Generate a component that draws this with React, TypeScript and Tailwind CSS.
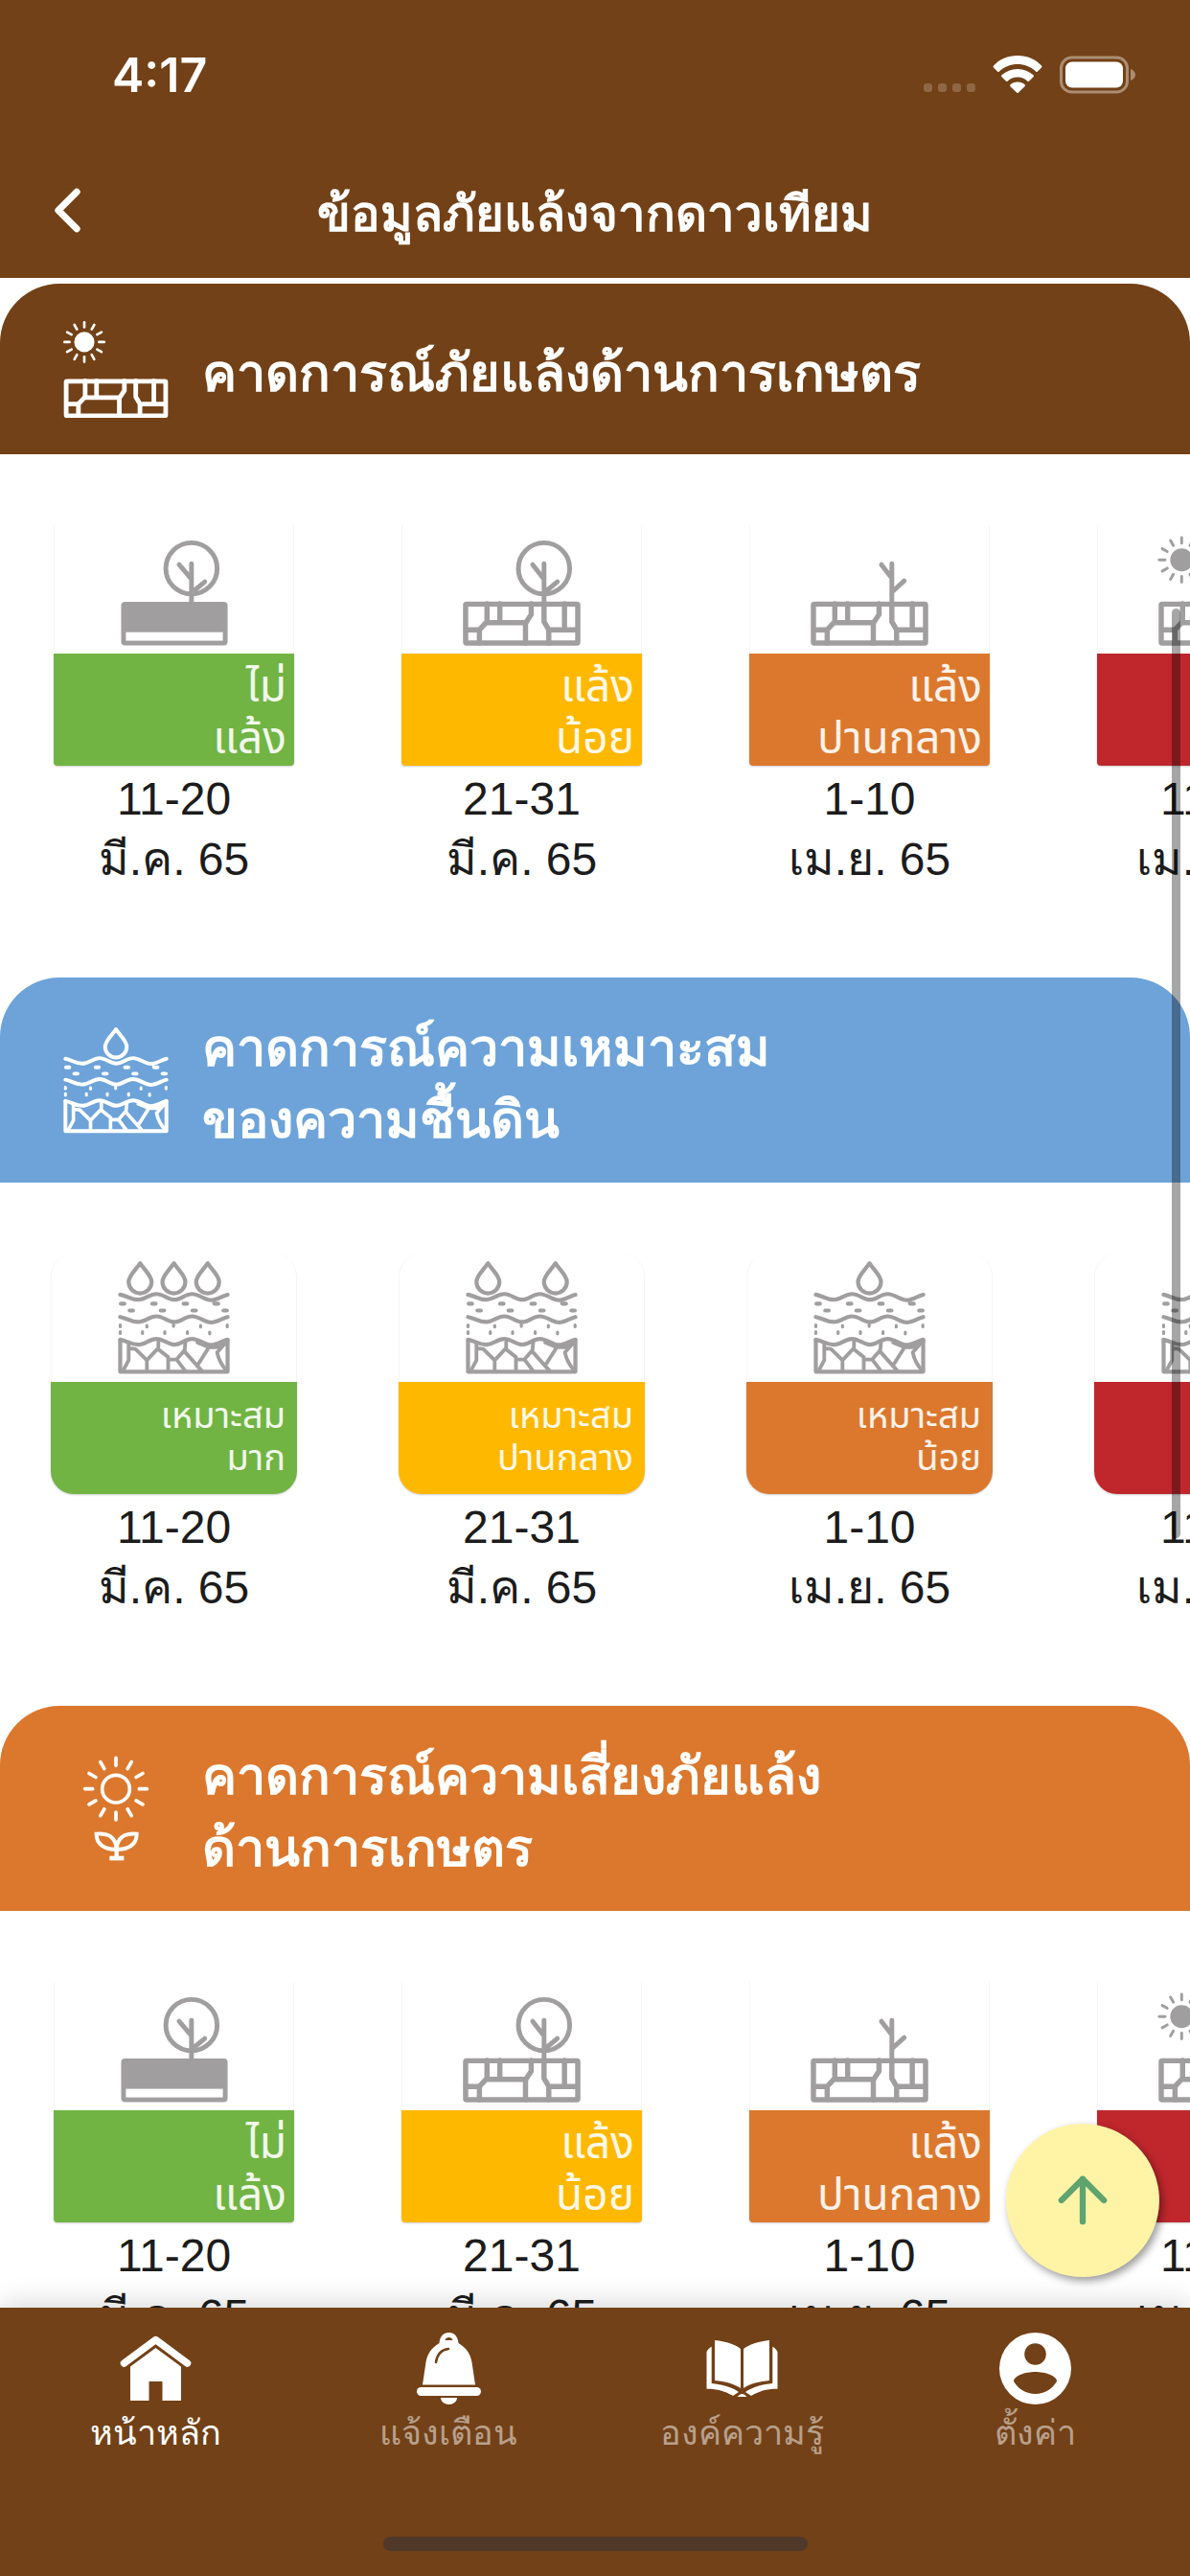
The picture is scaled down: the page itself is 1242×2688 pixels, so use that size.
import type { ReactNode } from 'react'
import { ArrowUp, ChevronLeft } from 'lucide-react'
import clsx from 'clsx'

type Level = 'none' | 'low' | 'medium' | 'high'
type Kind = 'drought' | 'soil'

interface Forecast {
  level: Level
  label: [string, string]
  days: string
  month: string
}

interface ForecastSection {
  id: string
  title: string[]
  kind: Kind
  banner: string
  icon: ReactNode
  items: Forecast[]
}

const RAYS = [0, 30, 60, 90, 120, 150, 180, 210, 240, 270, 300, 330]

const levelColor: Record<Level, string> = {
  none: 'bg-[#71b443]',
  low: 'bg-[#ffb800]',
  medium: 'bg-[#db782d]',
  high: 'bg-[#bf272d]',
}

function SmallSun() {
  return (
    <g>
      <circle cx="88" cy="36" r="12" fill="currentColor" stroke="none" />
      {RAYS.map(a => (
        <path key={a} d="M88 18.500v-6" strokeWidth="3" transform={`rotate(${a} 88 36)`} />
      ))}
    </g>
  )
}

function CrackedGround() {
  return (
    <g strokeWidth="5.500">
      <rect x="66.500" y="82.500" width="118" height="41" rx="1" />
      <path d="M89 82v19l-8 8.500v14M67 109.500h14M102.500 82v20M88 102h42M135.500 82v11.500l-6 9v21M149 82v19l5 8.500v14M154 109.500h30M170.500 82v27" />
    </g>
  )
}

function DroughtDrawing({ level }: { level: Level }) {
  return (
    <svg viewBox="0 0 251 134" className="w-[251px] text-[#a09e9f]" fill="none" stroke="currentColor" strokeWidth="5" strokeLinecap="round">
      {level === 'none' && (
        <>
          <rect x="70" y="80" width="112" height="46" rx="4" fill="currentColor" stroke="none" />
          <rect x="75" y="112" width="102" height="9" fill="#fff" stroke="none" />
          <circle cx="144" cy="45" r="27" />
          <path d="M144 40v42M131 41l12 14M158 59l-12 10" />
        </>
      )}
      {level === 'low' && (
        <>
          <CrackedGround />
          <circle cx="149" cy="45" r="27" />
          <path d="M149 40v42M137 41l11 14M163 59l-12 10" />
        </>
      )}
      {level === 'medium' && (
        <>
          <CrackedGround />
          <path d="M149 40v42M138 41l10 13M162 58l-12 11" />
        </>
      )}
      {level === 'high' && (
        <>
          <CrackedGround />
          <SmallSun />
        </>
      )}
    </svg>
  )
}

const dashes = [[36, 163], [129, 163], [222, 163], [314, 163], [62, 183], [154, 183], [248, 183], [340, 183]]
const dots = [[39, 229], [118, 230], [197, 228], [277, 230], [356, 229], [39, 249], [105, 249], [171, 249], [238, 249], [304, 250]]

function SoilLayers({ drops, className }: { drops: number[], className: string }) {
  return (
    <svg viewBox="32 34 332 338" className={className} fill="none" stroke="currentColor" strokeWidth="12" strokeLinecap="round" strokeLinejoin="round">
      {drops.map(x => (
        <path key={x} d="M0 43C-12 62-34 80-34 98a34 34 0 0 0 68 0C34 80 12 62 0 43z" transform={`translate(${x} 0)`} />
      ))}
      {[0, 66, 133].map(y => (
        <path
          key={y}
          d="M39 136C60 140 70 151 92 151S125 134 146 134 180 151 199 151 232 134 252 134 290 152 308 152 340 140 357 136"
          transform={`translate(0 ${y})`}
        />
      ))}
      {dashes.map(([x, y]) => (
        <path key={`${x}-${y}`} d={`M${x + 5} ${y}h10`} />
      ))}
      <path d="M315 163v-12" strokeWidth="6" />
      {dots.map(([x, y]) => (
        <path key={`${x}-${y}`} d={`M${x} ${y - 3}v5`} strokeWidth="9" />
      ))}
      <path d="M39 270v94h318v-94" />
      <path
        strokeWidth="11"
        d="M64 280v50l-16 30M66 295l18 2 34 33v32M118 330l34-36v-18M152 298l29 23v40M181 328h25l24-28 2-24M206 328l26 34M231 306l50 56M270 342l28-44v-8l-30-12M298 292h26l31-22M354 275l-28 32q6 30 28 54"
      />
    </svg>
  )
}

function SunAndCracks() {
  return (
    <svg viewBox="63 10 125 117" className="w-[110px] shrink-0 text-white" fill="none" stroke="currentColor" strokeLinecap="round">
      <SmallSun />
      <CrackedGround />
    </svg>
  )
}

function SunAndSprout() {
  return (
    <svg viewBox="18 38 330 330" className="w-[110px] shrink-0 text-white" fill="none" stroke="currentColor" strokeWidth="11" strokeLinecap="round">
      <circle cx="183" cy="142" r="43" />
      {RAYS.map(a => (
        <path key={a} d="M183 69V45" transform={`rotate(${a} 183 142)`} />
      ))}
      <path d="M122 283c40-3 61 12 63 48-38 2-63-16-63-48zM248 283c-40-3-61 12-63 48 38 2 63-16 63-48z" strokeWidth="12" />
      <path d="M185 325v30" strokeWidth="13" />
      <path d="M170 359h31" strokeWidth="14" strokeLinecap="square" />
    </svg>
  )
}

const droughtItems: Forecast[] = [
  { level: 'none', label: ['ไม่', 'แล้ง'], days: '11-20', month: 'มี.ค. 65' },
  { level: 'low', label: ['แล้ง', 'น้อย'], days: '21-31', month: 'มี.ค. 65' },
  { level: 'medium', label: ['แล้ง', 'ปานกลาง'], days: '1-10', month: 'เม.ย. 65' },
  { level: 'high', label: ['แล้ง', 'มาก'], days: '11-20', month: 'เม.ย. 65' },
]

const soilItems: Forecast[] = [
  { level: 'none', label: ['เหมาะสม', 'มาก'], days: '11-20', month: 'มี.ค. 65' },
  { level: 'low', label: ['เหมาะสม', 'ปานกลาง'], days: '21-31', month: 'มี.ค. 65' },
  { level: 'medium', label: ['เหมาะสม', 'น้อย'], days: '1-10', month: 'เม.ย. 65' },
  { level: 'high', label: ['ไม่', 'เหมาะสม'], days: '11-20', month: 'เม.ย. 65' },
]

const soilDrops: Record<Level, number[]> = {
  none: [98, 198, 298],
  low: [98, 298],
  medium: [198],
  high: [],
}

const sections: ForecastSection[] = [
  {
    id: 'drought',
    title: ['คาดการณ์ภัยแล้งด้านการเกษตร'],
    kind: 'drought',
    banner: 'bg-[#724117]',
    icon: <SunAndCracks />,
    items: droughtItems,
  },
  {
    id: 'soil',
    title: ['คาดการณ์ความเหมาะสม', 'ของความชื้นดิน'],
    kind: 'soil',
    banner: 'bg-[#6da3d9]',
    icon: <SoilLayers drops={[198]} className="w-[110px] shrink-0 text-white" />,
    items: soilItems,
  },
  {
    id: 'risk',
    title: ['คาดการณ์ความเสี่ยงภัยแล้ง', 'ด้านการเกษตร'],
    kind: 'drought',
    banner: 'bg-[#db782d]',
    icon: <SunAndSprout />,
    items: droughtItems,
  },
]

function ForecastItem({ item, kind }: { item: Forecast, kind: Kind }) {
  const soil = kind === 'soil'

  return (
    <li className="flex w-[363px] shrink-0 flex-col items-center">
      <div
        className={clsx(
          'flex h-[134px] justify-center border-x border-neutral-100',
          soil ? 'w-[257px] items-end rounded-t-3xl pb-2' : 'w-[251px]',
        )}
      >
        {soil
          ? <SoilLayers drops={soilDrops[item.level]} className="w-[117px] text-[#a09e9f]" />
          : <DroughtDrawing level={item.level} />}
      </div>
      <div
        className={clsx(
          'mb-[3px] flex h-[117px] flex-col justify-center text-right font-["Noto_Sans_Thai","Liberation_Sans",sans-serif] text-white/90 shadow-[0_1px_2px_rgba(0,0,0,0.2)]',
          levelColor[item.level],
          soil ? 'w-[257px] rounded-b-3xl pr-3 text-[38px] leading-[44px]' : 'w-[251px] rounded-b pt-2 pr-2 text-[46px] leading-[54px]',
        )}
      >
        <span>{item.label[0]}</span>
        <span>{item.label[1]}</span>
      </div>
      <p className="text-center text-5xl leading-[63px] text-[#1c1c1c]">
        {item.days}
        <br />
        {item.month}
      </p>
    </li>
  )
}

function SectionBlock({ section }: { section: ForecastSection }) {
  return (
    <section>
      <div className={clsx('flex min-h-[178px] items-center gap-[35px] rounded-t-[62px] px-[66px] py-7', section.banner)}>
        {section.icon}
        <h2 className="pt-2 text-[54px] leading-[75px] font-bold text-white">
          {section.title.map(line => (
            <span key={line} className="block">{line}</span>
          ))}
        </h2>
      </div>
      <ul className="flex overflow-x-auto pt-[74px] pb-[92px] [scrollbar-width:none]">
        {section.items.map(item => (
          <ForecastItem key={item.days + item.month} item={item} kind={section.kind} />
        ))}
      </ul>
    </section>
  )
}

function StatusBar() {
  return (
    <div className="flex h-[152px] items-center justify-between pt-1 pr-14 pl-[117px] text-white">
      <time className="font-[Inter,sans-serif] text-[50px] font-semibold">4:17</time>
      <div className="flex items-center gap-[18px]">
        <svg viewBox="0 0 54 40" className="w-[54px]" fill="#fff" fillOpacity="0.2">
          {[0, 15, 30, 45].map(x => <rect key={x} x={x} y="29" width="9" height="9" rx="3" />)}
        </svg>
        <svg viewBox="0 0 52 40" className="w-[52px]" fill="#fff">
          <path d="M26 0C36 0 45 4 51 10.500q1 1 0 2l-4 4q-1 1-2 0C40 11.500 33 9 26 9S12 11.500 7 16.500q-1 1-2 0l-4-4q-1-1 0-2C7 4 16 0 26 0z" />
          <path d="M26 14c6.500 0 12 2.300 16.500 6.300q1 1 0 2l-4.300 4.200q-1 1-2 0C33.500 24 30 22.500 26 22.500S18.500 24 15.800 26.500q-1 1-2 0l-4.300-4.200q-1-1 0-2C14 16.300 19.500 14 26 14z" />
          <path d="M26 27.500c3 0 5.500 1 7.500 2.700q1 1 0 2l-6.500 6.300q-1 1-2 0l-6.500-6.300q-1-1 0-2c2-1.700 4.500-2.700 7.500-2.700z" />
        </svg>
        <svg viewBox="0 0 80 40" className="w-20" fill="none">
          <rect x="1.500" y="2" width="69" height="36" rx="11" stroke="#fff" strokeOpacity="0.4" strokeWidth="3" />
          <rect x="6" y="6.500" width="60" height="27" rx="7" fill="#fff" />
          <path d="M74 14c3 1 5 3.500 5 6s-2 5-5 6z" fill="#fff" fillOpacity="0.4" />
        </svg>
      </div>
    </div>
  )
}

function HomeIcon() {
  return (
    <svg viewBox="0 0 75 75" className="size-[75px]" fill="#fff">
      <path d="M4.500 32 37.500 7.500l33 24.500" fill="none" stroke="#fff" strokeWidth="7.500" strokeLinecap="round" strokeLinejoin="round" />
      <path d="M37.500 16 64 35.500V71H44.500V51h-14v20H11V35.500z" />
    </svg>
  )
}

function BellIcon() {
  return (
    <svg viewBox="0 0 75 75" className="size-[75px]" fill="#fff">
      <path fillRule="evenodd" d="M37.500 0c6 0 9.500 4.500 10 11C57 17 60 23 61.500 31l3.500 23.500H10L13.500 31C15 23 18 17 27.500 11c.5-6.500 4-11 10-11zm-4 8h8c-1-4-7-4-8 0z" />
      <path d="M24 31c1-7 5-13 13-14" fill="none" stroke="#724117" strokeWidth="2.500" strokeLinecap="round" />
      <rect x="4" y="57" width="67" height="9" rx="4.500" />
      <path d="M29 68h17c0 4-4 7-8.500 7S29 72 29 68z" />
    </svg>
  )
}

function BookIcon() {
  return (
    <svg viewBox="0 0 75 75" className="size-[75px]" fill="#fff">
      <path d="M9 8c10 1 21 4 27 9v41C29 53 19 51 9 50zM66 8c-10 1-21 4-27 9v41c7-5 17-7 27-8z" />
      <path d="M5.700 14.700C3 16 1.500 18 .5 20v38.700C11 58.500 20 61 28 66l6-4C26 56.500 16 54 5.700 53zM69.300 14.700c2.700 1.300 4.200 3.300 5.200 5.300v38.700C64 58.500 55 61 47 66l-6-4c8-5.500 18-8 28.300-9z" />
      <path d="M32.500 67q5-6 10 0z" />
    </svg>
  )
}

function AccountIcon() {
  return (
    <svg viewBox="0 0 75 75" className="size-[75px]" fill="#fff">
      <circle cx="37.500" cy="37.500" r="37.500" />
      <circle cx="37.500" cy="22.500" r="11.300" fill="#724117" />
      <path d="M15 51c0-6 12-10 22.500-10S60 45 60 51c-5 8-13 13-22.500 13S20 59 15 51z" fill="#724117" />
    </svg>
  )
}

const tabs = [
  { label: 'หน้าหลัก', icon: <HomeIcon />, active: true },
  { label: 'แจ้งเตือน', icon: <BellIcon />, active: false },
  { label: 'องค์ความรู้', icon: <BookIcon />, active: false },
  { label: 'ตั้งค่า', icon: <AccountIcon />, active: false },
]

function TabBar() {
  return (
    <nav className="relative flex h-[280px] shrink-0 flex-col items-center justify-between bg-[#724117] px-[9px] py-[26px] shadow-[0_0_30px_rgba(0,0,0,0.2)]">
      <ul className="grid w-full grid-cols-4">
        {tabs.map(tab => (
          <li key={tab.label}>
            <a href="#" className="flex flex-col items-center">
              {tab.icon}
              <span className={clsx('text-4xl leading-[60px]', tab.active ? 'text-white' : 'text-white/50')}>
                {tab.label}
              </span>
            </a>
          </li>
        ))}
      </ul>
      <div className="h-[15px] w-[443px] rounded-full bg-[#50392a]" />
    </nav>
  )
}

export default function App() {
  return (
    <div className='relative flex h-screen flex-col overflow-hidden bg-white font-["Liberation_Sans",sans-serif]'>
      <header className="shrink-0 bg-[#724117]">
        <StatusBar />
        <div className="grid h-[138px] grid-cols-[1fr_auto_1fr] items-center px-8 text-white">
          <button type="button" aria-label="ย้อนกลับ" className="justify-self-start pb-1">
            <ChevronLeft size={77} strokeWidth={2.2} />
          </button>
          <h1 className="pt-1 text-[51px] leading-[75px] font-bold">ข้อมูลภัยแล้งจากดาวเทียม</h1>
        </div>
      </header>

      <main className="min-h-0 flex-1 overflow-y-auto pt-1.5 [scrollbar-width:none]">
        {sections.map(section => (
          <SectionBlock key={section.id} section={section} />
        ))}
      </main>

      {/* scroll position */}
      <div className="absolute top-[635px] right-[10px] h-[970px] w-[9px] rounded-full bg-black/35" />

      <button
        type="button"
        aria-label="กลับขึ้นด้านบน"
        className="absolute right-8 bottom-[312px] z-10 flex size-40 items-center justify-center rounded-full bg-[#fff4a6] text-[#5fa36f] shadow-[3px_4px_8px_rgba(0,0,0,0.4)]"
      >
        <ArrowUp size={76} />
      </button>

      <TabBar />
    </div>
  )
}
